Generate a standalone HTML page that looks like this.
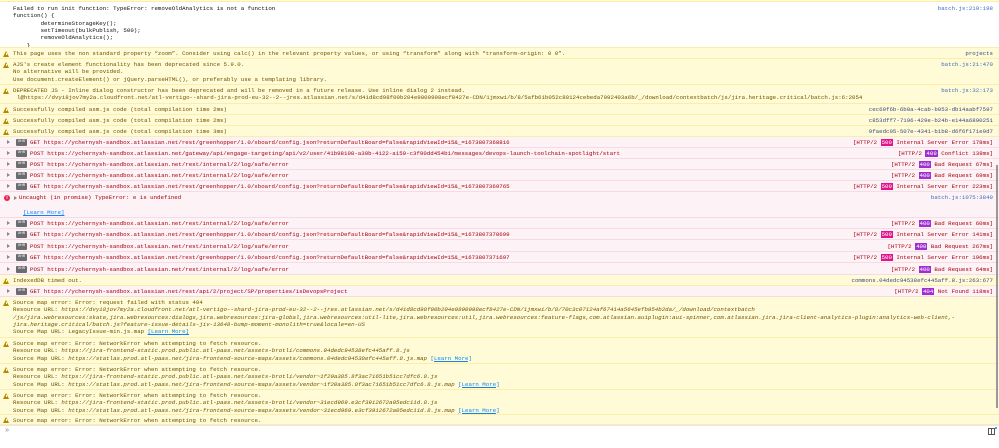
<!DOCTYPE html>
<html><head><meta charset="utf-8"><style>
*{margin:0;padding:0;box-sizing:border-box}
body{width:999px;height:448px;overflow:hidden;background:#fff;font-family:"Liberation Mono",monospace;font-size:5.75px;position:relative}
.r{position:absolute;left:0;width:999px;overflow:hidden;border-bottom:1px solid #fff0a8}
.w{background:#fffbd6;color:#715100;border-bottom-color:#fbeeab}
.e{background:#fdf2f5;color:#a4000f;border-bottom-color:#f7dbe2}
.p{background:#fff;color:#0c0c0d;border-bottom-color:#fbeeab}
.l{position:absolute;white-space:pre;line-height:7.33px;height:7.33px}
.loc{position:absolute;right:6px;white-space:pre;line-height:7.33px;color:#3a6fc0}
.ic{position:absolute;left:3px;width:0;height:0;border-left:3.5px solid transparent;border-right:3.5px solid transparent;border-bottom:6px solid #b58a00}
.ic:after{content:"";position:absolute;left:-0.5px;top:2px;width:1px;height:2px;background:#fffbd6}
.tr{position:absolute;left:7px;width:0;height:0;border-top:2.5px solid transparent;border-bottom:2.5px solid transparent;border-left:3.5px solid #888}
.x{position:absolute;left:16px;width:11px;height:7px;background:#6b6b70;color:#fff;font-size:4px;line-height:7px;text-align:center;border-radius:1px}
.b5{background:#e0148c;color:#fff;padding:0 1px}
.b4{background:#a02fd0;color:#fff;padding:0 1px}
.lm{color:#0a84ff;text-decoration:underline}
i{font-style:italic}
</style></head><body>
<div class="r w" style="top:0;height:2px"></div>
<div class="r p" style="top:2px;height:46px">
<div class="l" style="left:13px;top:3px">Failed to run init function: TypeError: removeOldAnalytics is not a function</div>
<div class="l" style="left:13px;top:10.3px">function() {</div>
<div class="l" style="left:13px;top:17.6px">        determineStorageKey();</div>
<div class="l" style="left:13px;top:25px">        setTimeout(bulkPublish, 500);</div>
<div class="l" style="left:13px;top:32.3px">        removeOldAnalytics();</div>
<div class="l" style="left:13px;top:39.6px">    }</div>
<div class="loc" style="top:3px">batch.js:219:198</div>
</div>
<div class="r w" style="top:48px;height:11px"><div class="ic" style="top:3px"></div><div class="l" style="left:13px;top:2px">This page uses the non standard property “zoom”. Consider using calc() in the relevant property values, or using “transform” along with “transform-origin: 0 0”.</div><div class="loc" style="top:2px;color:#3a4a80">projects</div></div>
<div class="r w" style="top:59px;height:26px"><div class="ic" style="top:3px"></div>
<div class="l" style="left:13px;top:2px">AJS's create element functionality has been deprecated since 5.9.0.</div>
<div class="l" style="left:13px;top:9.3px">No alternative will be provided.</div>
<div class="l" style="left:13px;top:16.6px">Use document.createElement() or jQuery.parseHTML(), or preferably use a templating library.</div>
<div class="loc" style="top:2px">batch.js:21:470</div></div>
<div class="r w" style="top:85px;height:19px"><div class="ic" style="top:3px"></div>
<div class="l" style="left:13px;top:2px">DEPRECATED JS - Inline dialog constructor has been deprecated and will be removed in a future release. Use inline dialog 2 instead.</div>
<div class="l" style="left:17px;top:9.3px">l@https://dvyi8jov7my2a.cloudfront.net/atl-vertigo--shard-jira-prod-eu-32--2--jres.atlassian.net/s/d41d8cd98f00b204e9800998ecf8427e-CDN/1jmxwi/b/8/5afb61b052c80124cebeda7092403a6b/_/download/contextbatch/js/jira.heritage.critical/batch.js:6:2054</div>
<div class="loc" style="top:2px">batch.js:32:173</div></div>
<div class="r w" style="top:104px;height:11px"><div class="ic" style="top:3px"></div><div class="l" style="left:13px;top:2px">Successfully compiled asm.js code (total compilation time 2ms)</div><div class="loc" style="top:2px;color:#3a4a80">cec69f6b-6b0a-4cab-b053-db14aabf7597</div></div>
<div class="r w" style="top:115px;height:11px"><div class="ic" style="top:3px"></div><div class="l" style="left:13px;top:2px">Successfully compiled asm.js code (total compilation time 2ms)</div><div class="loc" style="top:2px;color:#3a4a80">c853dff7-7196-429e-b24b-e144a6890251</div></div>
<div class="r w" style="top:126px;height:11px"><div class="ic" style="top:3px"></div><div class="l" style="left:13px;top:2px">Successfully compiled asm.js code (total compilation time 3ms)</div><div class="loc" style="top:2px;color:#3a4a80">9faedc05-507e-4341-b1b8-d6f6f171e9d7</div></div>

<div class="r e" style="top:137px;height:11px"><div class="tr" style="top:3px"></div><div class="x" style="top:2px">XHR</div><div class="l" style="left:30px;top:2px">GET https://ychernysh-sandbox.atlassian.net/rest/greenhopper/1.0/xboard/config.json?returnDefaultBoard=false&amp;rapidViewId=15&amp;_=1673807368816</div><div class="loc" style="top:2px;color:#a4000f">[HTTP/2 <span class="b5">500</span> Internal Server Error 178ms]</div></div>
<div class="r e" style="top:148px;height:11px"><div class="tr" style="top:3px"></div><div class="x" style="top:2px">XHR</div><div class="l" style="left:30px;top:2px">POST https://ychernysh-sandbox.atlassian.net/gateway/api/engage-targeting/api/v2/user/41b98108-a30b-4122-a159-c3f90dd454b1/messages/devops-launch-toolchain-spotlight/start</div><div class="loc" style="top:2px;color:#a4000f">[HTTP/2 <span class="b4">409</span> Conflict 138ms]</div></div>
<div class="r e" style="top:159px;height:11px"><div class="tr" style="top:3px"></div><div class="x" style="top:2px">XHR</div><div class="l" style="left:30px;top:2px">POST https://ychernysh-sandbox.atlassian.net/rest/internal/2/log/safe/error</div><div class="loc" style="top:2px;color:#a4000f">[HTTP/2 <span class="b4">400</span> Bad Request 67ms]</div></div>
<div class="r e" style="top:170px;height:11px"><div class="tr" style="top:3px"></div><div class="x" style="top:2px">XHR</div><div class="l" style="left:30px;top:2px">POST https://ychernysh-sandbox.atlassian.net/rest/internal/2/log/safe/error</div><div class="loc" style="top:2px;color:#a4000f">[HTTP/2 <span class="b4">400</span> Bad Request 69ms]</div></div>
<div class="r e" style="top:181px;height:11px"><div class="tr" style="top:3px"></div><div class="x" style="top:2px">XHR</div><div class="l" style="left:30px;top:2px">GET https://ychernysh-sandbox.atlassian.net/rest/greenhopper/1.0/xboard/config.json?returnDefaultBoard=false&amp;rapidViewId=15&amp;_=1673807369765</div><div class="loc" style="top:2px;color:#a4000f">[HTTP/2 <span class="b5">500</span> Internal Server Error 223ms]</div></div>
<div class="r e" style="top:192px;height:26px">
<div style="position:absolute;left:4px;top:3px;width:6px;height:6px;border-radius:50%;background:#e22850;color:#fff;font-size:5px;line-height:6px;text-align:center;font-weight:bold">!</div>
<div class="tr" style="top:3.5px;left:14px"></div>
<div class="l" style="left:19px;top:2px">Uncaught (in promise) TypeError: e is undefined</div>
<div class="l lm" style="left:23px;top:17px">[Learn More]</div>
<div class="loc" style="top:2px">batch.js:1075:3849</div></div>
<div class="r e" style="top:218px;height:11px"><div class="tr" style="top:3px"></div><div class="x" style="top:2px">XHR</div><div class="l" style="left:30px;top:2px">POST https://ychernysh-sandbox.atlassian.net/rest/internal/2/log/safe/error</div><div class="loc" style="top:2px;color:#a4000f">[HTTP/2 <span class="b4">400</span> Bad Request 60ms]</div></div>
<div class="r e" style="top:229px;height:11px"><div class="tr" style="top:3px"></div><div class="x" style="top:2px">XHR</div><div class="l" style="left:30px;top:2px">GET https://ychernysh-sandbox.atlassian.net/rest/greenhopper/1.0/xboard/config.json?returnDefaultBoard=false&amp;rapidViewId=15&amp;_=1673807370699</div><div class="loc" style="top:2px;color:#a4000f">[HTTP/2 <span class="b5">500</span> Internal Server Error 141ms]</div></div>
<div class="r e" style="top:240px;height:12px"><div class="tr" style="top:3.5px"></div><div class="x" style="top:2.5px">XHR</div><div class="l" style="left:30px;top:2.5px">POST https://ychernysh-sandbox.atlassian.net/rest/internal/2/log/safe/error</div><div class="loc" style="top:2.5px;color:#a4000f">[HTTP/2 <span class="b4">400</span> Bad Request 267ms]</div></div>
<div class="r e" style="top:252px;height:11px"><div class="tr" style="top:3px"></div><div class="x" style="top:2px">XHR</div><div class="l" style="left:30px;top:2px">GET https://ychernysh-sandbox.atlassian.net/rest/greenhopper/1.0/xboard/config.json?returnDefaultBoard=false&amp;rapidViewId=15&amp;_=1673807371697</div><div class="loc" style="top:2px;color:#a4000f">[HTTP/2 <span class="b5">500</span> Internal Server Error 196ms]</div></div>
<div class="r e" style="top:263px;height:12px"><div class="tr" style="top:3.5px"></div><div class="x" style="top:2.5px">XHR</div><div class="l" style="left:30px;top:2.5px">POST https://ychernysh-sandbox.atlassian.net/rest/internal/2/log/safe/error</div><div class="loc" style="top:2.5px;color:#a4000f">[HTTP/2 <span class="b4">400</span> Bad Request 64ms]</div></div>
<div class="r w" style="top:275px;height:11px"><div class="ic" style="top:3px"></div><div class="l" style="left:13px;top:2px">IndexedDB timed out.</div><div class="loc" style="top:2px;color:#3a4a80">commons.04dedc94538efc445aff.8.js:263:677</div></div>
<div class="r e" style="top:286px;height:11px"><div class="tr" style="top:3px"></div><div class="x" style="top:2px">XHR</div><div class="l" style="left:30px;top:2px">GET https://ychernysh-sandbox.atlassian.net/rest/api/2/project/SP/properties/isDevopsProject</div><div class="loc" style="top:2px;color:#a4000f">[HTTP/2 <span class="b4">404</span> Not Found 118ms]</div></div>

<div class="r w" style="top:297px;height:41px"><div class="ic" style="top:3px"></div>
<div class="l" style="left:13px;top:2px">Source map error: Error: request failed with status 404</div>
<div class="l" style="left:13px;top:9.3px">Resource URL: <i>https://dvyi8jov7my2a.cloudfront.net/atl-vertigo--shard-jira-prod-eu-32--2--jres.atlassian.net/s/d41d8cd98f00b204e9800998ecf8427e-CDN/1jmxwi/b/8/70c3c07124af67414a5645efb954b2da/_/download/contextbatch</i></div>
<div class="l" style="left:13px;top:16.6px"><i>/js/jira.webresources:skate,jira.webresources:dialogs,jira.webresources:jira-global,jira.webresources:util-lite,jira.webresources:util,jira.webresources:feature-flags,com.atlassian.auiplugin:aui-spinner,com.atlassian.jira.jira-client-analytics-plugin:analytics-web-client,-</i></div>
<div class="l" style="left:13px;top:24px"><i>jira.heritage.critical/batch.js?feature-issue-details-jiv-13648-bump-moment-monolith=true&amp;locale=en-US</i></div>
<div class="l" style="left:13px;top:31.3px">Source Map URL: LegacyIssue-min.js.map <span class="lm">[Learn More]</span></div></div>
<div class="r w" style="top:338px;height:26px"><div class="ic" style="top:3px"></div>
<div class="l" style="left:13px;top:2px">Source map error: Error: NetworkError when attempting to fetch resource.</div>
<div class="l" style="left:13px;top:9.3px">Resource URL: <i>https://jira-frontend-static.prod.public.atl-paas.net/assets-brotli/commons.04dedc94538efc445aff.8.js</i></div>
<div class="l" style="left:13px;top:16.6px">Source Map URL: <i>https://statlas.prod.atl-paas.net/jira-frontend-source-maps/assets/commons.04dedc94538efc445aff.8.js.map</i> <span class="lm">[Learn More]</span></div></div>
<div class="r w" style="top:364px;height:26px"><div class="ic" style="top:3px"></div>
<div class="l" style="left:13px;top:2px">Source map error: Error: NetworkError when attempting to fetch resource.</div>
<div class="l" style="left:13px;top:9.3px">Resource URL: <i>https://jira-frontend-static.prod.public.atl-paas.net/assets-brotli/vendor~1f20a385.8f3ac71651b51cc7dfc6.8.js</i></div>
<div class="l" style="left:13px;top:16.6px">Source Map URL: <i>https://statlas.prod.atl-paas.net/jira-frontend-source-maps/assets/vendor~1f20a385.8f3ac71651b51cc7dfc6.8.js.map</i> <span class="lm">[Learn More]</span></div></div>
<div class="r w" style="top:390px;height:25px"><div class="ic" style="top:3px"></div>
<div class="l" style="left:13px;top:2px">Source map error: Error: NetworkError when attempting to fetch resource.</div>
<div class="l" style="left:13px;top:9.3px">Resource URL: <i>https://jira-frontend-static.prod.public.atl-paas.net/assets-brotli/vendor~31ecd969.e3cf3912672a05edc11d.8.js</i></div>
<div class="l" style="left:13px;top:16.6px">Source Map URL: <i>https://statlas.prod.atl-paas.net/jira-frontend-source-maps/assets/vendor~31ecd969.e3cf3912672a05edc11d.8.js.map</i> <span class="lm">[Learn More]</span></div></div>
<div class="r w" style="top:415px;height:10px"><div class="ic" style="top:2px"></div><div class="l" style="left:13px;top:1.5px">Source map error: Error: NetworkError when attempting to fetch resource.</div></div>
<div style="position:absolute;top:425px;left:0;width:999px;height:1px;background:#e8e8e8"></div>
<div style="position:absolute;left:5px;top:427px;font-size:7px;color:#888;line-height:8px">»</div>
<div style="position:absolute;left:996px;top:165px;width:2px;height:243px;background:#999"></div>
<div style="position:absolute;left:988px;top:428px;width:7px;height:7px;border:1px solid #555;background:#fff"><div style="position:absolute;left:2px;top:0;width:1px;height:5px;background:#555"></div></div>
<div style="position:absolute;left:995px;top:427px;width:2px;height:2px;background:#0a84ff;border-radius:50%"></div>
</body></html>
